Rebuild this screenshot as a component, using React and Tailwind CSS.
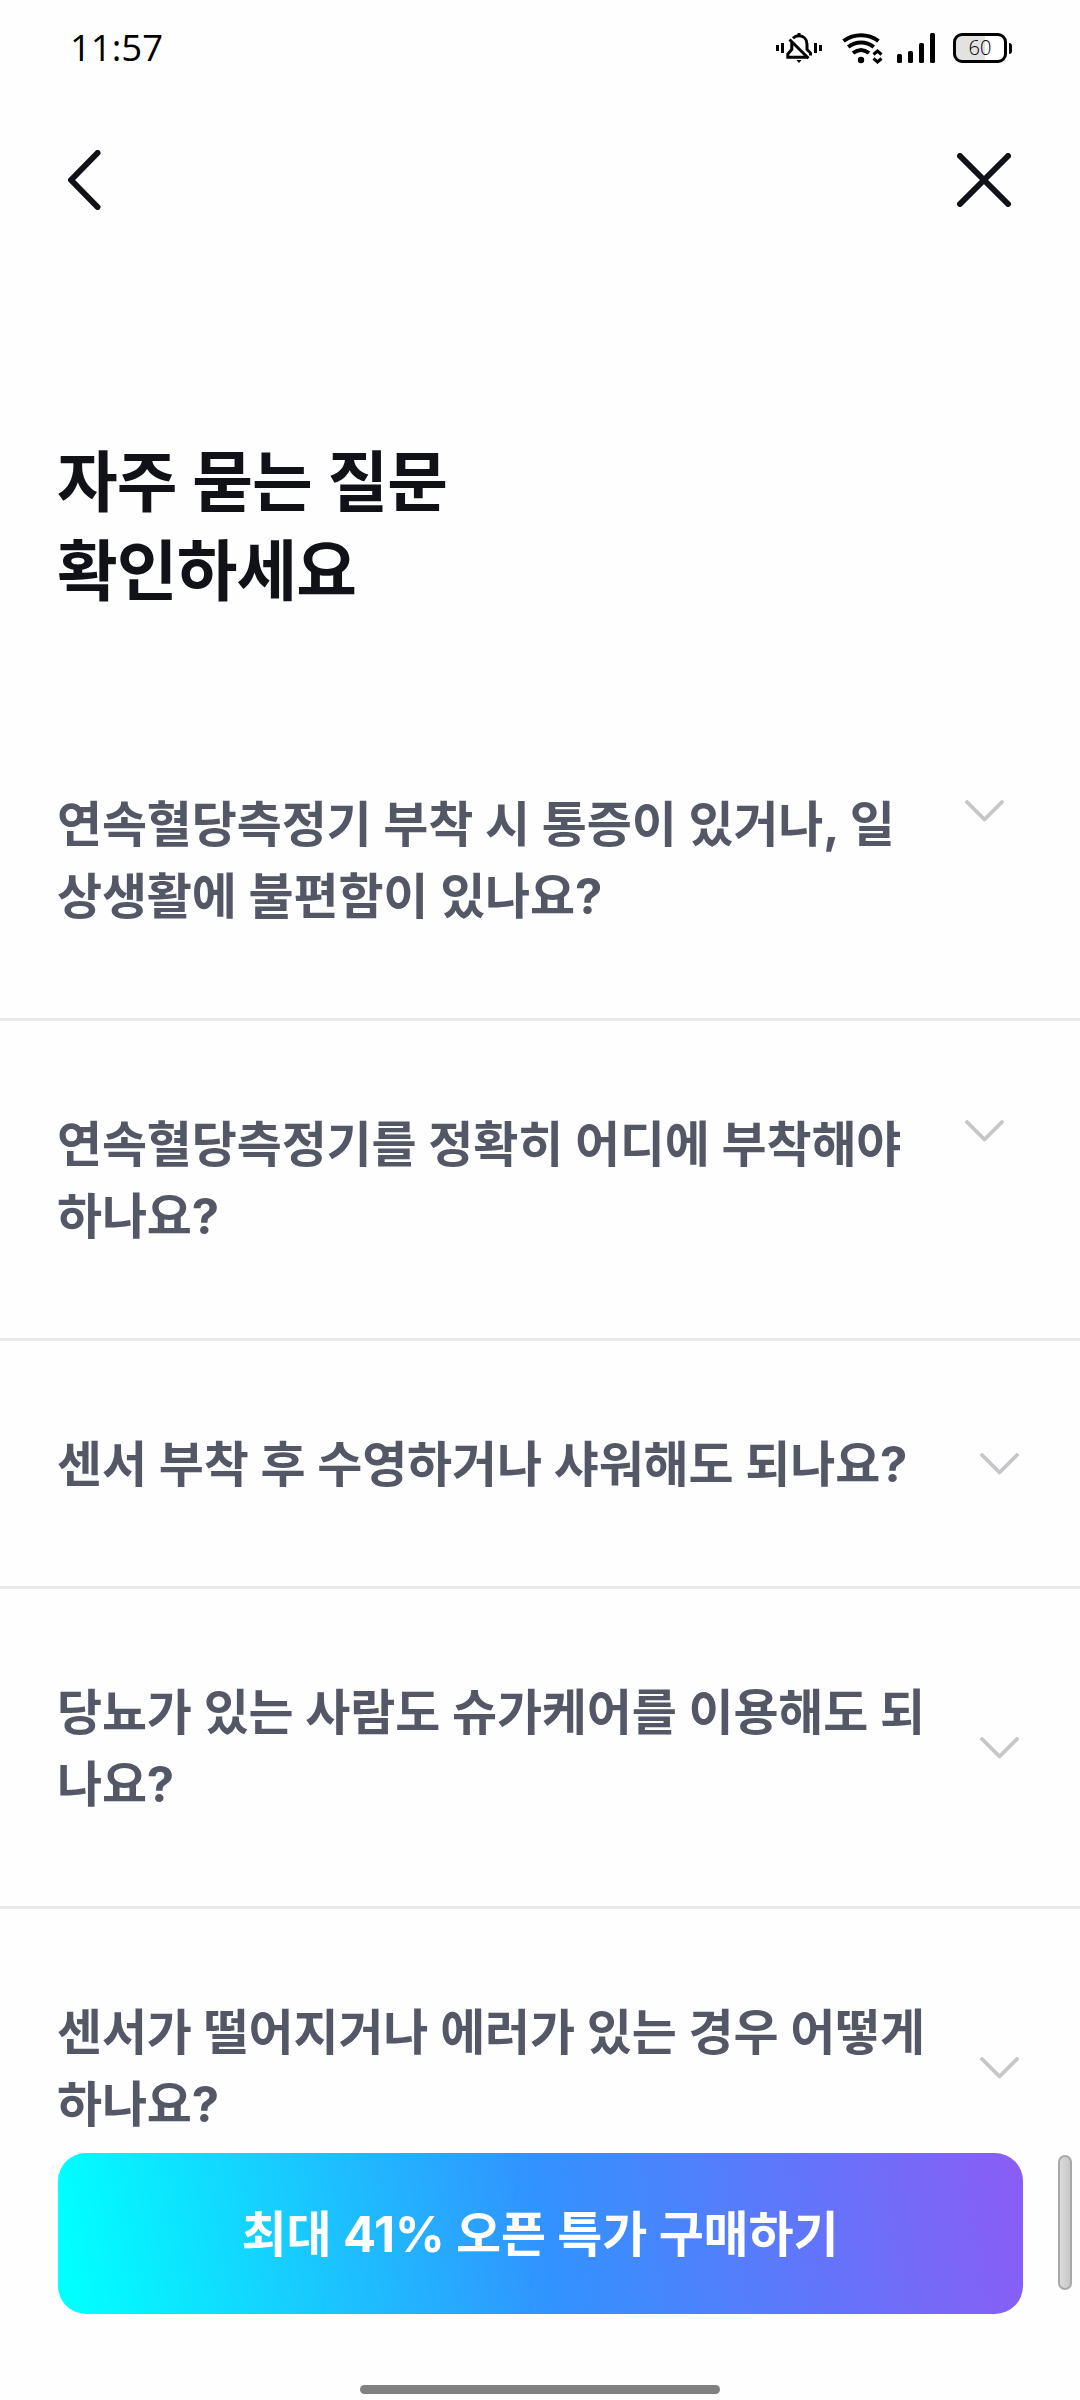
const faqs = [
  { lines: ["연속혈당측정기 부착 시 통증이 있거나, 일", "상생활에 불편함이 있나요?"], chevron: "mr-[76px] mt-[13px] self-start" },
  { lines: ["연속혈당측정기를 정확히 어디에 부착해야", "하나요?"], chevron: "mr-[76px] mt-[13px] self-start" },
  { lines: ["센서 부착 후 수영하거나 샤워해도 되나요?"], chevron: "mr-[61px] mt-[1px] self-center" },
  { lines: ["당뇨가 있는 사람도 슈가케어를 이용해도 되", "나요?"], chevron: "mr-[61px] mt-[2px] self-center" },
  { lines: ["센서가 떨어지거나 에러가 있는 경우 어떻게", "하나요?"], chevron: "mr-[61px] mt-[2px] self-center" },
];

function SilentIcon() {
  return (
    <svg width="46" height="32" viewBox="0 0 46 32" fill="none" stroke="#000" strokeWidth="3">
      <path d="M1.500 13v6M6.500 11v10M39.500 11v10M44.500 13v6" />
      <path d="M17 6.200C18.500 4.600 20.500 3.800 22.800 3.800c5 0 8.200 3.600 8.200 8.400v5.300l3.500 3.500v2.500M15.800 10.500v7l-4 4.500v3.200H31M13.500 7.500l19 18.800" />
      <path d="M23 1v3" />
      <path d="M20.500 28h5l-2.500 3z" fill="#000" stroke="none" />
    </svg>
  );
}

function WifiIcon() {
  return (
    <svg width="42" height="32" viewBox="0 0 42 32" fill="none" stroke="#000" strokeWidth="4">
      <path d="M1.500 9C12 1.200 26 1.200 36.500 9" />
      <path d="M6.200 15C14 9 24 9 31.800 15" />
      <path d="M11 21C16.500 16.800 21.500 16.800 27 21" />
      <circle cx="19" cy="28" r="3.200" fill="#000" stroke="none" />
      <path d="M31.500 22.500l4-3.500 4 3.500M31.500 26.500l4 3.500 4-3.500" strokeWidth="3" />
    </svg>
  );
}

function SignalIcon() {
  return (
    <svg width="38" height="30" viewBox="0 0 38 30" fill="#000">
      <rect x="0" y="21" width="5" height="9" rx="1.500" />
      <rect x="11" y="18" width="5" height="12" rx="1.500" />
      <rect x="22" y="10" width="5" height="20" rx="1.500" />
      <rect x="33" y="0" width="5" height="30" rx="1.500" />
    </svg>
  );
}

function Battery() {
  return (
    <div className="flex items-center gap-[2px]">
      <div className="flex h-[30px] w-[54px] items-center justify-center rounded-[9px] border-3 border-black bg-linear-to-r from-[#e2e2e2] from-60% to-white to-60%">
        <span className="font-['Open_Sans',sans-serif] text-[20px] leading-none font-light text-black">60</span>
      </div>
      <div className="h-[11px] w-[3px] rounded-r-sm bg-black" />
    </div>
  );
}

function Chevron({ className }) {
  return (
    <svg className={`shrink-0 ${className}`} width="39" height="22" viewBox="0 0 39 22" fill="none" stroke="#c6c6c8" strokeWidth="3.800" strokeLinecap="round" strokeLinejoin="round">
      <path d="M2 2l17.500 17.500L37 2" />
    </svg>
  );
}

export default function App() {
  return (
    <div className="relative h-[2400px] w-[1080px] overflow-hidden bg-[#fefefe] font-['Noto_Sans_CJK_KR',sans-serif]">
      <div className="flex h-24 items-center justify-between pr-[68px] pl-[70px]">
        <span className="mb-[1px] font-['Open_Sans',sans-serif] text-[36.500px] leading-none text-black">11:57</span>
        <div className="flex items-center">
          <SilentIcon />
          <div className="ml-5"><WifiIcon /></div>
          <div className="ml-[13px]"><SignalIcon /></div>
          <div className="ml-[18px]"><Battery /></div>
        </div>
      </div>

      <header className="flex h-[168px] items-center justify-between pr-[69px] pl-[68px]">
        <svg width="33" height="60" viewBox="0 0 33 60" fill="none" stroke="#111217" strokeWidth="6" strokeLinecap="round" strokeLinejoin="round">
          <path d="M29.500 3L3 30l26.500 27" />
        </svg>
        <svg width="54" height="54" viewBox="0 0 54 54" fill="none" stroke="#111217" strokeWidth="6" strokeLinecap="round">
          <path d="M3 3l48 48M51 3L3 51" />
        </svg>
      </header>

      <h1 className="mt-[169px] pl-[57px] text-[66px] leading-[89px] font-bold tracking-[-0.9px] text-[#111217] [word-spacing:1.5px]">
        자주 묻는 질문
        <br />
        확인하세요
      </h1>

      <ul className="mt-[90px]">
        {faqs.map((faq) => (
          <li key={faq.lines[0]} className="flex justify-between border-b-3 border-[#e7e8ea] pt-[86px] pb-[87px] pl-[57px]">
            <p className="mt-[2px] -mb-[2px] font-['Inter','Noto_Sans_CJK_KR',sans-serif] text-[49px] leading-[72px] font-bold tracking-[-0.15px] whitespace-nowrap text-[#545766] [word-spacing:0.4px]">
              {faq.lines.map((line) => (
                <span key={line} className="block">{line}</span>
              ))}
            </p>
            <Chevron className={faq.chevron} />
          </li>
        ))}
      </ul>

      <div className="absolute inset-x-0 bottom-0 flex h-[247px] flex-col items-center bg-[#fefefe]">
        <button className="h-[161px] w-[965px] rounded-[28px] bg-[linear-gradient(80deg,#00ffff_2%,#3193ff_50%,#8b5cf6_100%)] pt-[3px] font-['Inter','Noto_Sans_CJK_KR',sans-serif] text-[49px] leading-[72px] font-bold tracking-[-0.15px] text-white">
          최대 41% 오픈 특가 구매하기
        </button>
        <div className="mt-[71px] h-[9px] w-[360px] rounded-full bg-[#808080]" />
      </div>
      <div className="absolute right-[8px] bottom-[110px] h-[135px] w-[14px] rounded-full border-2 border-[#a8a8a8] bg-linear-to-r from-[#dadada] to-[#c8c8c8]" />
    </div>
  );
}
